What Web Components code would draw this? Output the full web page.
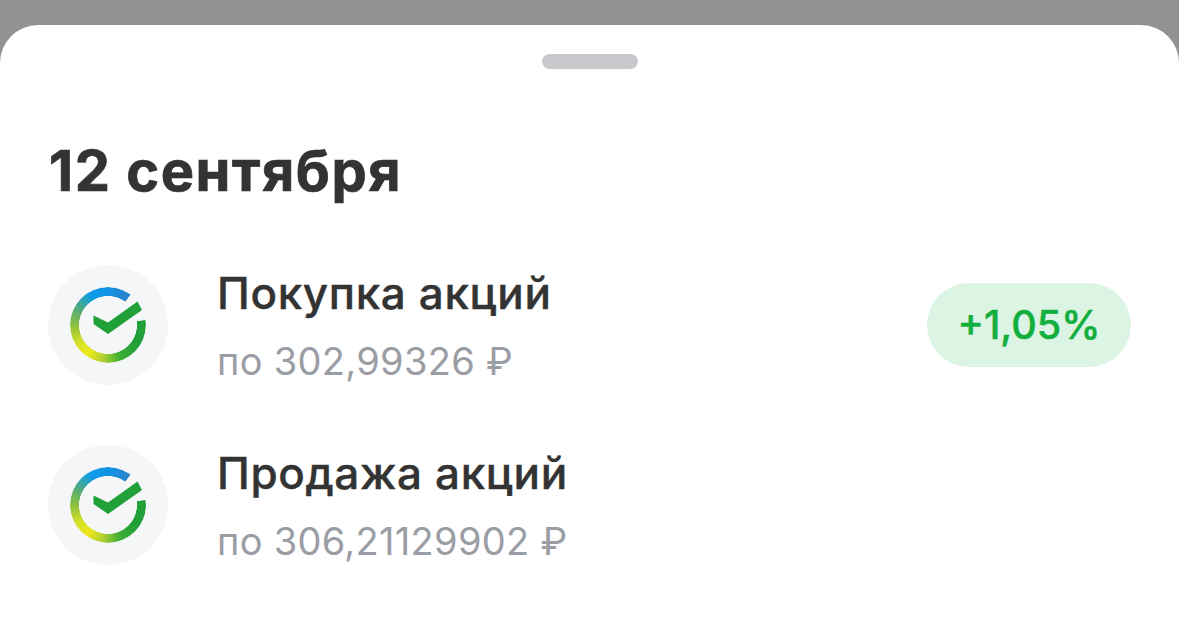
<!DOCTYPE html>
<html>
<head>
<meta charset="utf-8">
<style>
    html,body{
        margin: 0;
        padding: 0;
        height: 642px;
        overflow: hidden;
        background: #929292;
        font-family: Inter, "Noto Sans", sans-serif;
    }
</style>
</head>
<body>
<bottom-sheet>
    <sheet-title>12 сентября</sheet-title>
    <deal-row title-text="Покупка акций" price="по 302,99326 ₽" badge="+1,05%"></deal-row>
    <deal-row title-text="Продажа акций" price="по 306,21129902 ₽"></deal-row>
</bottom-sheet>
<script>
class BottomSheet extends HTMLElement {
    constructor(){
        super();
        this.attachShadow({mode:'open'}).innerHTML=`
        <style>
            :host{
                display: block;
                margin-top: 25px;
                height: 617px;
                box-sizing: border-box;
                padding: 29px 48px 0;
                background: #fff;
                border-radius: 38px 38px 0 0;
            }
            .handle{
                width: 96px;
                height: 15px;
                margin: 0 auto;
                border-radius: 8px;
                background: #c6c8cc;
            }
            .list{
                display: flex;
                flex-direction: column;
                gap: 60px;
            }
        </style>
        <div class="handle"></div>
        <div class="list"><slot></slot></div>
        `;
    }
}
customElements.define('bottom-sheet', BottomSheet);

class SheetTitle extends HTMLElement {
    constructor(){
        super();
        this.attachShadow({mode:'open'}).innerHTML=`
        <style>
            :host{
                display: block;
                margin: 69px 0 0 1px;
                font-size: 56px;
                line-height: 67px;
                font-weight: 700;
                -webkit-text-stroke: 0.7px #333333;
                letter-spacing: 1.5px;
                color: #333333;
            }
        </style>
        <slot></slot>
        `;
    }
}
customElements.define('sheet-title', SheetTitle);

class SberLogo extends HTMLElement {
    constructor(){
        super();
        this.attachShadow({mode:'open'}).innerHTML=`
        <style>
            :host{
                display: flex;
                flex: none;
                align-items: center;
                justify-content: center;
                width: 120px;
                height: 120px;
                border-radius: 50%;
                background: #f4f6f8;
            }
            .mark{
                position: relative;
                width: 76px;
                height: 76px;
            }
            .ring{
                width: 100%;
                height: 100%;
                border-radius: 50%;
                background: conic-gradient(from 0deg,
                    #0f94e4 0deg, #2a83c9 36deg, transparent 37deg, transparent 82deg,
                    #21a038 83deg, #21a038 125deg, #3fae35 160deg, #b5d22e 190deg,
                    #eee71c 215deg, #d3e029 240deg, #8fc23c 268deg, #52ab78 298deg,
                    #0f9ce8 330deg, #0f94e4 360deg);
                -webkit-mask: radial-gradient(circle, transparent 28.7px, #000 29.2px);
                mask: radial-gradient(circle, transparent 28.7px, #000 29.2px);
            }
            svg{
                position: absolute;
                left: 0;
                top: 0;
            }
        </style>
        <div class="mark">
            <div class="ring"></div>
            <svg width="76" height="76" viewBox="0 0 76 76">
                <polygon fill="#21a038" points="23.5,28.5 23.5,37 38,47 72,23 67.5,14.5 38,35.5"/>
            </svg>
        </div>
        `;
    }
}
customElements.define('sber-logo', SberLogo);

class DealRow extends HTMLElement {
    constructor(){
        super();
        this.attachShadow({mode:'open'});
    }
    connectedCallback(){
        const badge = this.getAttribute('badge');
        this.shadowRoot.innerHTML=`
        <style>
            :host{
                display: flex;
                align-items: center;
                height: 120px;
            }
            .text{
                flex: 1;
                margin-left: 49px;
                padding-bottom: 2px;
            }
            .name{
                font-size: 44px;
                line-height: 56px;
                font-weight: 500;
                -webkit-text-stroke: 0.4px #333333;
                letter-spacing: 0.65px;
                color: #333333;
            }
            .price{
                margin-top: 18px;
                font-size: 38px;
                line-height: 44px;
                letter-spacing: 0.3px;
                color: #9b9da4;
            }
            .badge{
                width: 204px;
                height: 84px;
                line-height: 84px;
                text-align: center;
                border-radius: 42px;
                background: #dcf4e3;
                color: #12af3e;
                font-size: 39.5px;
                font-weight: 500;
                -webkit-text-stroke: 0.5px #12af3e;
            }
        </style>
        <sber-logo></sber-logo>
        <div class="text">
            <div class="name">${this.getAttribute('title-text')}</div>
            <div class="price">${this.getAttribute('price')}</div>
        </div>
        ${badge ? `<div class="badge">${badge}</div>` : ''}
        `;
    }
}
customElements.define('deal-row', DealRow);
</script>
</body>
</html>
